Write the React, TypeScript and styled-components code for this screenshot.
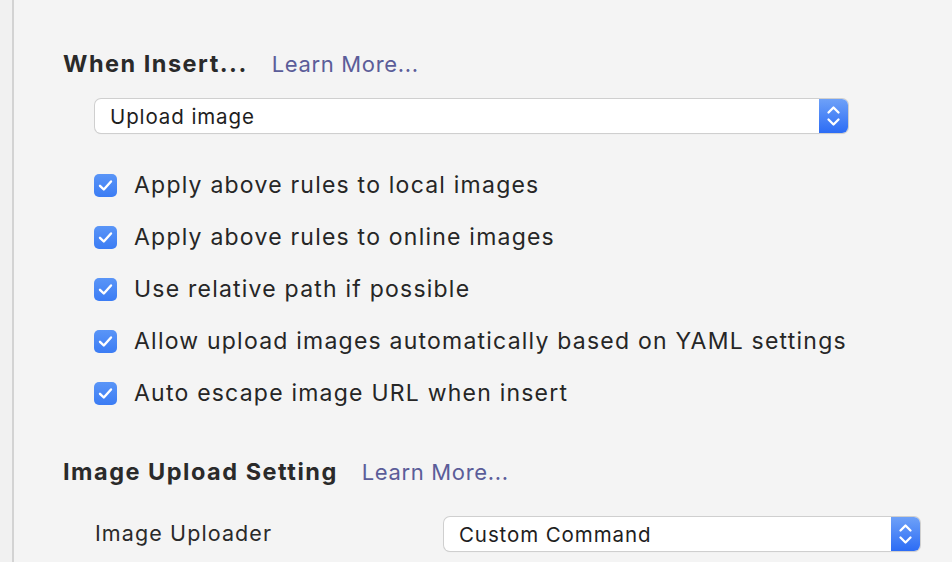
import React from "react";
import styled, { createGlobalStyle } from "styled-components";

const Global = createGlobalStyle`
  html, body { margin: 0; padding: 0; background: #f4f4f4; }
  body { font-family: Inter, "Helvetica Neue", Arial, sans-serif; color: #262626; }
  #root { min-height: 562px; }
`;

const Page = styled.div`
  display: flex;
  height: 562px;
  overflow: hidden;
`;

const Gutter = styled.div`
  width: 12px;
  flex: none;
  background: #f1f1f1;
  border-right: 2px solid #d3d3d3;
`;

const Content = styled.div`
  flex: 1;
  padding: 49px 0 0 49px;
  display: flex;
  flex-direction: column;
`;

const SectionHead = styled.div<{ $mt?: number }>`
  display: flex;
  align-items: baseline;
  gap: 24px;
  margin-top: ${(p) => p.$mt ?? 0}px;
  height: 33px;
`;

const Title = styled.h2`
  margin: 0;
  font-size: 23.5px;
  font-weight: 700;
  color: #2a2a2a;
  letter-spacing: 1.5px;
`;

const Link = styled.a`
  font-size: 22px;
  color: #5b5d99;
  letter-spacing: 0.65px;
  text-decoration: none;
`;

const SelectBox = styled.div<{ $w: number }>`
  width: ${(p) => p.$w}px;
  height: 34px;
  box-sizing: border-box;
  display: flex;
  align-items: stretch;
  background: #fff;
  border-radius: 6px;
  box-shadow: 0 0 0 1px #cfcfcf, 0 1px 1px rgba(0, 0, 0, 0.12);
  overflow: hidden;
`;

const SelectText = styled.span`
  flex: 1;
  display: flex;
  align-items: center;
  padding-left: 15px;
  font-size: 20.5px;
  letter-spacing: 0.9px;
  color: #1e1e1e;
`;

const Stepper = styled.span`
  width: 29px;
  flex: none;
  display: flex;
  align-items: center;
  justify-content: center;
  background: linear-gradient(#6ea1f8, #2c6cf5);
`;

const Checks = styled.div`
  display: flex;
  flex-direction: column;
  margin-top: 26px;
  margin-left: 31px;
`;

const CheckRow = styled.label`
  display: flex;
  align-items: center;
  height: 52px;
  gap: 17px;
  font-size: 23px;
  letter-spacing: 1.22px;
  color: #262626;
`;

const Box = styled.span`
  width: 23px;
  height: 23px;
  border-radius: 5px;
  flex: none;
  display: flex;
  align-items: center;
  justify-content: center;
  background: linear-gradient(#5a95f7, #3b7cf4);
`;

const Row = styled.div`
  display: flex;
  align-items: center;
  margin-top: 27px;
  padding-left: 32px;
`;

const RowLabel = styled.span`
  width: 349px;
  padding-bottom: 2px;
  font-size: 21.5px;
  letter-spacing: 1.1px;
  color: #2a2a2a;
`;

const SelectIndent = styled.div`
  margin-top: 17px;
  margin-left: 32px;
`;

const Chevrons = () => (
  <svg width="15" height="24" viewBox="0 0 15 24" fill="none">
    <path d="M2.5 8.5 L7.5 3.5 L12.5 8.5" stroke="#fff" strokeWidth="2.3" strokeLinecap="round" strokeLinejoin="round" />
    <path d="M2.5 15.5 L7.5 20.5 L12.5 15.5" stroke="#fff" strokeWidth="2.3" strokeLinecap="round" strokeLinejoin="round" />
  </svg>
);

const Select = ({ value, width }: { value: string; width: number }) => (
  <SelectBox $w={width}>
    <SelectText>{value}</SelectText>
    <Stepper>
      <Chevrons />
    </Stepper>
  </SelectBox>
);

const Check = () => (
  <Box>
    <svg width="15" height="13" viewBox="0 0 15 13" fill="none">
      <path d="M2 6.8 L5.8 10.5 L13 2.5" stroke="#fff" strokeWidth="2.4" strokeLinecap="round" strokeLinejoin="round" />
    </svg>
  </Box>
);

const options = [
  "Apply above rules to local images",
  "Apply above rules to online images",
  "Use relative path if possible",
  "Allow upload images automatically based on YAML settings",
  "Auto escape image URL when insert",
];

export default function App() {
  return (
    <Page>
      <Global />
      <Gutter />
      <Content>
        <SectionHead>
          <Title>When Insert...</Title>
          <Link>Learn More...</Link>
        </SectionHead>
        <SelectIndent>
          <Select value="Upload image" width={753} />
        </SelectIndent>
        <Checks>
          {options.map((o) => (
            <CheckRow key={o}>
              <Check />
              {o}
            </CheckRow>
          ))}
        </Checks>
        <SectionHead $mt={38}>
          <Title>Image Upload Setting</Title>
          <Link>Learn More...</Link>
        </SectionHead>
        <Row>
          <RowLabel>Image Uploader</RowLabel>
          <Select value="Custom Command" width={476} />
        </Row>
      </Content>
    </Page>
  );
}
